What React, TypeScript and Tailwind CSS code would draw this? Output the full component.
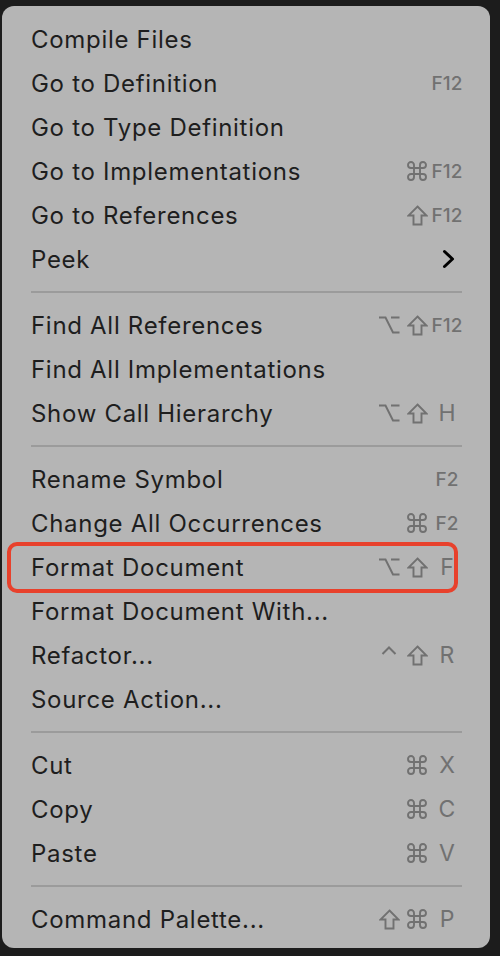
import React from "react";

type Key = "cmd" | "shift" | "opt" | "ctrl" | string;

interface Item {
  label: string;
  keys?: [Key, Key, Key];
  submenu?: boolean;
  highlight?: boolean;
}

const groups: Item[][] = [
  [
    { label: "Compile Files" },
    { label: "Go to Definition", keys: ["", "", "F12"] },
    { label: "Go to Type Definition" },
    { label: "Go to Implementations", keys: ["", "cmd", "F12"] },
    { label: "Go to References", keys: ["", "shift", "F12"] },
    { label: "Peek", submenu: true },
  ],
  [
    { label: "Find All References", keys: ["opt", "shift", "F12"] },
    { label: "Find All Implementations" },
    { label: "Show Call Hierarchy", keys: ["opt", "shift", "H"] },
  ],
  [
    { label: "Rename Symbol", keys: ["", "", "F2"] },
    { label: "Change All Occurrences", keys: ["", "cmd", "F2"] },
    { label: "Format Document", keys: ["opt", "shift", "F"], highlight: true },
    { label: "Format Document With..." },
    { label: "Refactor...", keys: ["ctrl", "shift", "R"] },
    { label: "Source Action..." },
  ],
  [
    { label: "Cut", keys: ["", "cmd", "X"] },
    { label: "Copy", keys: ["", "cmd", "C"] },
    { label: "Paste", keys: ["", "cmd", "V"] },
  ],
  [{ label: "Command Palette...", keys: ["shift", "cmd", "P"] }],
];

function Glyph({ k }: { k: Key }) {
  if (k === "cmd")
    return (
      <svg width="20" height="20" viewBox="0 0 20 20" fill="none" stroke="#717171" strokeWidth="1.9">
        <path d="M7 7V4A3 3 0 1 0 4 7H16A3 3 0 1 0 13 4V16A3 3 0 1 0 16 13H4A3 3 0 1 0 7 16Z" />
      </svg>
    );
  if (k === "shift")
    return (
      <svg width="21" height="21" viewBox="0 0 21 21" fill="none" stroke="#717171" strokeWidth="1.9" strokeLinejoin="miter">
        <path d="M10.5 1.5L19.5 10.5H14.5V19.5H6.5V10.5H1.5Z" />
      </svg>
    );
  if (k === "opt")
    return (
      <svg width="22" height="20" viewBox="0 0 22 20" fill="none" stroke="#717171" strokeWidth="2">
        <path d="M1 2.5H7.5L15 17.5H21.5M13 2.5H21.5" />
      </svg>
    );
  if (k === "ctrl")
    return (
      <svg width="16" height="20" viewBox="0 0 16 20" fill="none" stroke="#717171" strokeWidth="2">
        <path d="M1.5 9L8 2.5L14.5 9" />
      </svg>
    );
  if (k.startsWith("F") && k.length > 1)
    return <span className="text-[19px] font-medium">{k}</span>;
  return <span className="text-[23px]">{k}</span>;
}

function Shortcut({ keys }: { keys: [Key, Key, Key] }) {
  return (
    <div className="flex items-center gap-[4px] text-[#717171] leading-none">
      <div className="w-[26px] flex justify-center">{keys[0] && <Glyph k={keys[0]} />}</div>
      <div className="w-[22px] flex justify-center">{keys[1] && <Glyph k={keys[1]} />}</div>
      <div className="w-[30px] flex justify-center">{keys[2] && <Glyph k={keys[2]} />}</div>
    </div>
  );
}

function Row({ item }: { item: Item }) {
  return (
    <div className="relative h-[44px] flex items-center justify-between">
      <span className="text-[24px] leading-none tracking-[0.7px] text-[#1e1e1e] pt-[1px]">{item.label}</span>
      {item.keys && <Shortcut keys={item.keys} />}
      {item.submenu && (
        <svg className="mr-[7px]" width="13" height="20" viewBox="0 0 13 20" fill="none" stroke="#000" strokeWidth="3" strokeLinecap="round" strokeLinejoin="round">
          <path d="M2.5 2.5L10.5 10L2.5 17.5" />
        </svg>
      )}
      {item.highlight && (
        <div className="absolute top-[-3px] bottom-[-4px] left-[-24px] right-[4px] border-[4px] border-[#e8412c] rounded-[10px]" />
      )}
    </div>
  );
}

export default function App() {
  return (
    <div className="w-[500px] h-[956px] bg-[#1c1c1c] pt-[6px] pl-[2px] font-['Inter',sans-serif] overflow-hidden">
      <div className="w-[488px] h-[942px] bg-[#b5b5b5] rounded-[12px] pt-[11px] pl-[29px] pr-[28px]">
        {groups.map((g, gi) => (
          <div key={gi}>
            {gi > 0 && (
              <div className="h-[22px] flex items-center">
                <div className="h-[2px] w-full bg-[#9b9b9b]" />
              </div>
            )}
            {g.map((item) => (
              <Row key={item.label} item={item} />
            ))}
          </div>
        ))}
      </div>
    </div>
  );
}
